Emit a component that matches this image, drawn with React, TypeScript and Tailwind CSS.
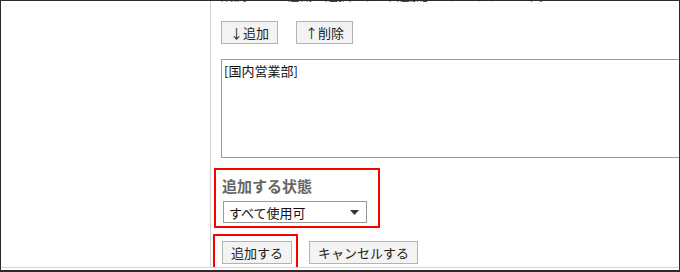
const jp = "font-['Noto_Sans_CJK_JP','Noto_Sans',sans-serif]";

function Btn({ children }: { children: React.ReactNode }) {
  return (
    <button className="h-[23px] px-[8px] border border-[#b3b3b3] bg-[#f3f3f3] text-[13px] leading-[17px] text-[#222]">
      {children}
    </button>
  );
}

export default function App() {
  return (
    <div className={`w-[680px] h-[272px] overflow-hidden bg-white border border-b-2 border-[#2b2b2b] ${jp}`}>
      <div className="flex h-[267px] border-b border-[#d4d4d4] overflow-hidden">
        {/* left column */}
        <div className="w-[210px] shrink-0 border-r border-[#d0d0d0]" />

        {/* right column */}
        <div className="flex-1 min-w-0 pl-[10px]">
          <div className="-mt-[15px] h-[17px] text-[13px] leading-[17px] text-[#444] whitespace-nowrap">
            所属させる組織を選択し、「↓追加」をクリックします。
          </div>

          <div className="flex gap-[18px] mt-[18px]">
            <Btn>↓追加</Btn>
            <Btn>↑削除</Btn>
          </div>

          <div className="mt-[15px] w-[480px] h-[99px] border border-[#9a9a9a] px-[2px] py-[2px] text-[13px] leading-[17px] text-[#111]">
            [国内営業部]
          </div>

          <div className="mt-[10px] -ml-[7px] w-[166px] h-[60px] border-2 border-[#ff0000] pl-[6px] pt-[6px]">
            <div className="text-[15px] leading-[20px] font-bold text-[#666]">追加する状態</div>
            <div className="mt-[5px] ml-px w-[144px] h-[22px] border border-[#9a9a9a] bg-white flex items-center justify-between pl-[5px] pr-[7px]">
              <span className="text-[13px] leading-[17px] text-[#111]">すべて使用可</span>
              <svg width="9" height="5" viewBox="0 0 9 5">
                <path d="M0 0H9L4.5 5Z" fill="#333" />
              </svg>
            </div>
          </div>

          <div className="flex items-start mt-[6px] -ml-[8px]">
            <div className="w-[85px] h-[36px] border-2 border-[#ff0000] pl-[7px] pt-[3px]">
              <Btn>追加する</Btn>
            </div>
            <div className="ml-[11px] pt-[5px]">
              <Btn>キャンセルする</Btn>
            </div>
          </div>
        </div>
      </div>
    </div>
  );
}
